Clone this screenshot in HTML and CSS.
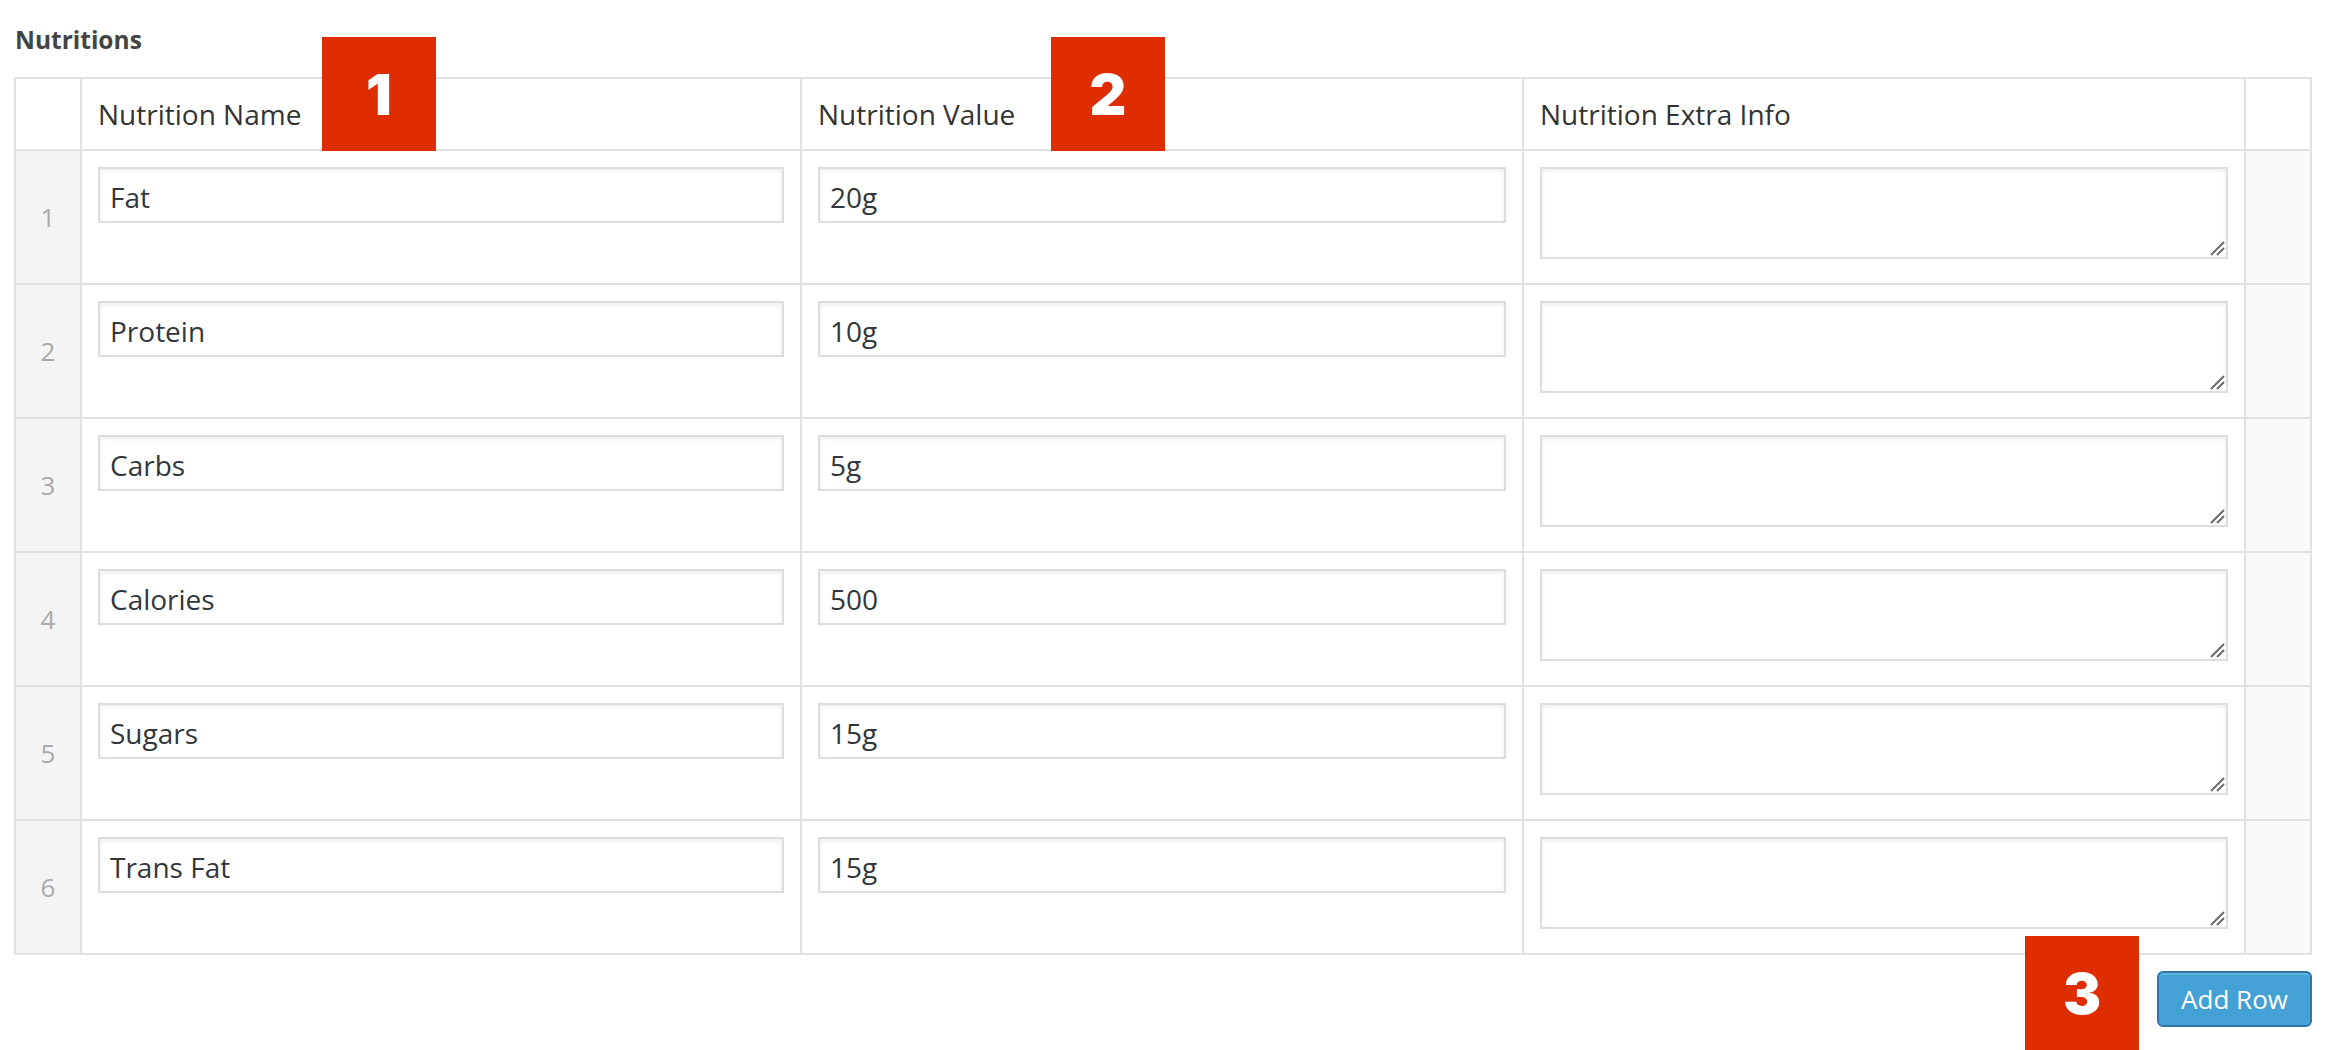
FILE: index.html
```html
<!DOCTYPE html>
<html lang="en">
<head>
<meta charset="utf-8">
<title>Nutritions</title>
<link rel="stylesheet" href="styles.css">
</head>
<body>
<div class="page">
  <div class="field-label">Nutritions</div>
  <table class="repeater">
    <thead>
      <tr>
        <th class="order"></th>
        <th class="col-name">Nutrition Name</th>
        <th class="col-value">Nutrition Value</th>
        <th class="col-extra">Nutrition Extra Info</th>
        <th class="remove"></th>
      </tr>
    </thead>
    <tbody>
      <tr>
        <td class="order">1</td>
        <td><input class="text" type="text" value="Fat"></td>
        <td><input class="text" type="text" value="20g"></td>
        <td><div class="area-wrap"><textarea class="area"></textarea><svg class="grip" viewBox="0 0 16 16" width="16" height="16"><path d="M2 15L15 2M8 15L15 8"/></svg></div></td>
        <td class="remove"></td>
      </tr>
      <tr>
        <td class="order">2</td>
        <td><input class="text" type="text" value="Protein"></td>
        <td><input class="text" type="text" value="10g"></td>
        <td><div class="area-wrap"><textarea class="area"></textarea><svg class="grip" viewBox="0 0 16 16" width="16" height="16"><path d="M2 15L15 2M8 15L15 8"/></svg></div></td>
        <td class="remove"></td>
      </tr>
      <tr>
        <td class="order">3</td>
        <td><input class="text" type="text" value="Carbs"></td>
        <td><input class="text" type="text" value="5g"></td>
        <td><div class="area-wrap"><textarea class="area"></textarea><svg class="grip" viewBox="0 0 16 16" width="16" height="16"><path d="M2 15L15 2M8 15L15 8"/></svg></div></td>
        <td class="remove"></td>
      </tr>
      <tr>
        <td class="order">4</td>
        <td><input class="text" type="text" value="Calories"></td>
        <td><input class="text" type="text" value="500"></td>
        <td><div class="area-wrap"><textarea class="area"></textarea><svg class="grip" viewBox="0 0 16 16" width="16" height="16"><path d="M2 15L15 2M8 15L15 8"/></svg></div></td>
        <td class="remove"></td>
      </tr>
      <tr>
        <td class="order">5</td>
        <td><input class="text" type="text" value="Sugars"></td>
        <td><input class="text" type="text" value="15g"></td>
        <td><div class="area-wrap"><textarea class="area"></textarea><svg class="grip" viewBox="0 0 16 16" width="16" height="16"><path d="M2 15L15 2M8 15L15 8"/></svg></div></td>
        <td class="remove"></td>
      </tr>
      <tr>
        <td class="order">6</td>
        <td><input class="text" type="text" value="Trans Fat"></td>
        <td><input class="text" type="text" value="15g"></td>
        <td><div class="area-wrap"><textarea class="area"></textarea><svg class="grip" viewBox="0 0 16 16" width="16" height="16"><path d="M2 15L15 2M8 15L15 8"/></svg></div></td>
        <td class="remove"></td>
      </tr>
    </tbody>
  </table>
  <div class="actions">
    <button class="add-row" type="button">Add Row</button>
  </div>

  <div class="marker marker-1">1</div>
  <div class="marker marker-2">2</div>
  <div class="marker marker-3">3</div>
</div>
</body>
</html>
```

FILE: styles.css
```css
html, body {
  margin: 0;
  padding: 0;
  background: #ffffff;
  overflow: hidden;
}

body {
  font-family: "Open Sans", "Liberation Sans", sans-serif;
  color: #333333;
}

.page {
  position: relative;
  width: 2298px;
  height: 1050px;
  padding: 23px 18px 0 14px;
  box-sizing: content-box;
}

.field-label {
  font-size: 24.5px;
  font-weight: 700;
  line-height: 34px;
  color: #444444;
  padding-left: 1px;
  margin-bottom: 20px;
}

.repeater {
  width: 2298px;
  table-layout: fixed;
  border-collapse: separate;
  border-spacing: 0;
  border: 2px solid #e1e1e1;
}

.repeater th,
.repeater td {
  box-sizing: border-box;
  border-left: 2px solid #e1e1e1;
  border-top: 2px solid #e1e1e1;
  padding: 16px;
  vertical-align: top;
}

.repeater tr > :first-child {
  border-left: 0;
}

.repeater thead th {
  border-top: 0;
  height: 70px;
  padding: 0 16px;
  vertical-align: middle;
  text-align: left;
  font-size: 28px;
  font-weight: 400;
  color: #333333;
  background: #ffffff;
}

.repeater th.order { width: 64px; }
.repeater th.col-name { width: 720px; }
.repeater th.col-value { width: 722px; }
.repeater th.col-extra { width: 722px; }
.repeater th.remove { width: 66px; }

.repeater tbody td {
  height: 134px;
}

.repeater tbody td.order {
  background: #f4f4f4;
  color: #aaaaaa;
  font-size: 26px;
  text-align: center;
  vertical-align: middle;
  padding: 0;
}

.repeater tbody td.remove {
  background: #f9f9f9;
  padding: 0;
}

.text,
.area {
  display: block;
  width: 100%;
  box-sizing: border-box;
  margin: 0;
  border: 2px solid #dddddd;
  border-radius: 0;
  background: #ffffff;
  box-shadow: inset 0 2px 4px rgba(0, 0, 0, 0.07);
  font-family: "Open Sans", "Liberation Sans", sans-serif;
  font-size: 28px;
  color: #32373c;
  outline: none;
}

.text {
  height: 56px;
  padding: 3px 10px 0 10px;
}

.area-wrap {
  position: relative;
}

.area {
  height: 92px;
  padding: 6px 10px;
  resize: none;
}

.grip {
  position: absolute;
  right: 3px;
  bottom: 3px;
  fill: none;
  stroke: #6b6b6b;
  stroke-width: 2;
}

.actions {
  display: flex;
  justify-content: flex-end;
  margin-top: 16px;
}

.add-row {
  height: 56px;
  width: 155px;
  box-sizing: border-box;
  padding: 0 20px;
  background: #44a1d6;
  border: 2px solid #2f77ab;
  border-radius: 6px;
  box-shadow: inset 0 2px 0 rgba(120, 200, 230, 0.5);
  color: #ffffff;
  font-family: "Open Sans", "Liberation Sans", sans-serif;
  font-size: 26px;
  line-height: 50px;
  cursor: pointer;
}

.marker {
  position: absolute;
  width: 114px;
  height: 114px;
  background: #de2d00;
  color: #ffffff;
  display: flex;
  align-items: center;
  justify-content: center;
  font-family: "Inter", "DejaVu Sans", sans-serif;
  font-weight: 900;
  font-size: 57px;
  line-height: 1;
}

.marker-1 { left: 322px; top: 37px; }
.marker-2 { left: 1051px; top: 37px; }
.marker-3 { left: 2025px; top: 936px; }
```
